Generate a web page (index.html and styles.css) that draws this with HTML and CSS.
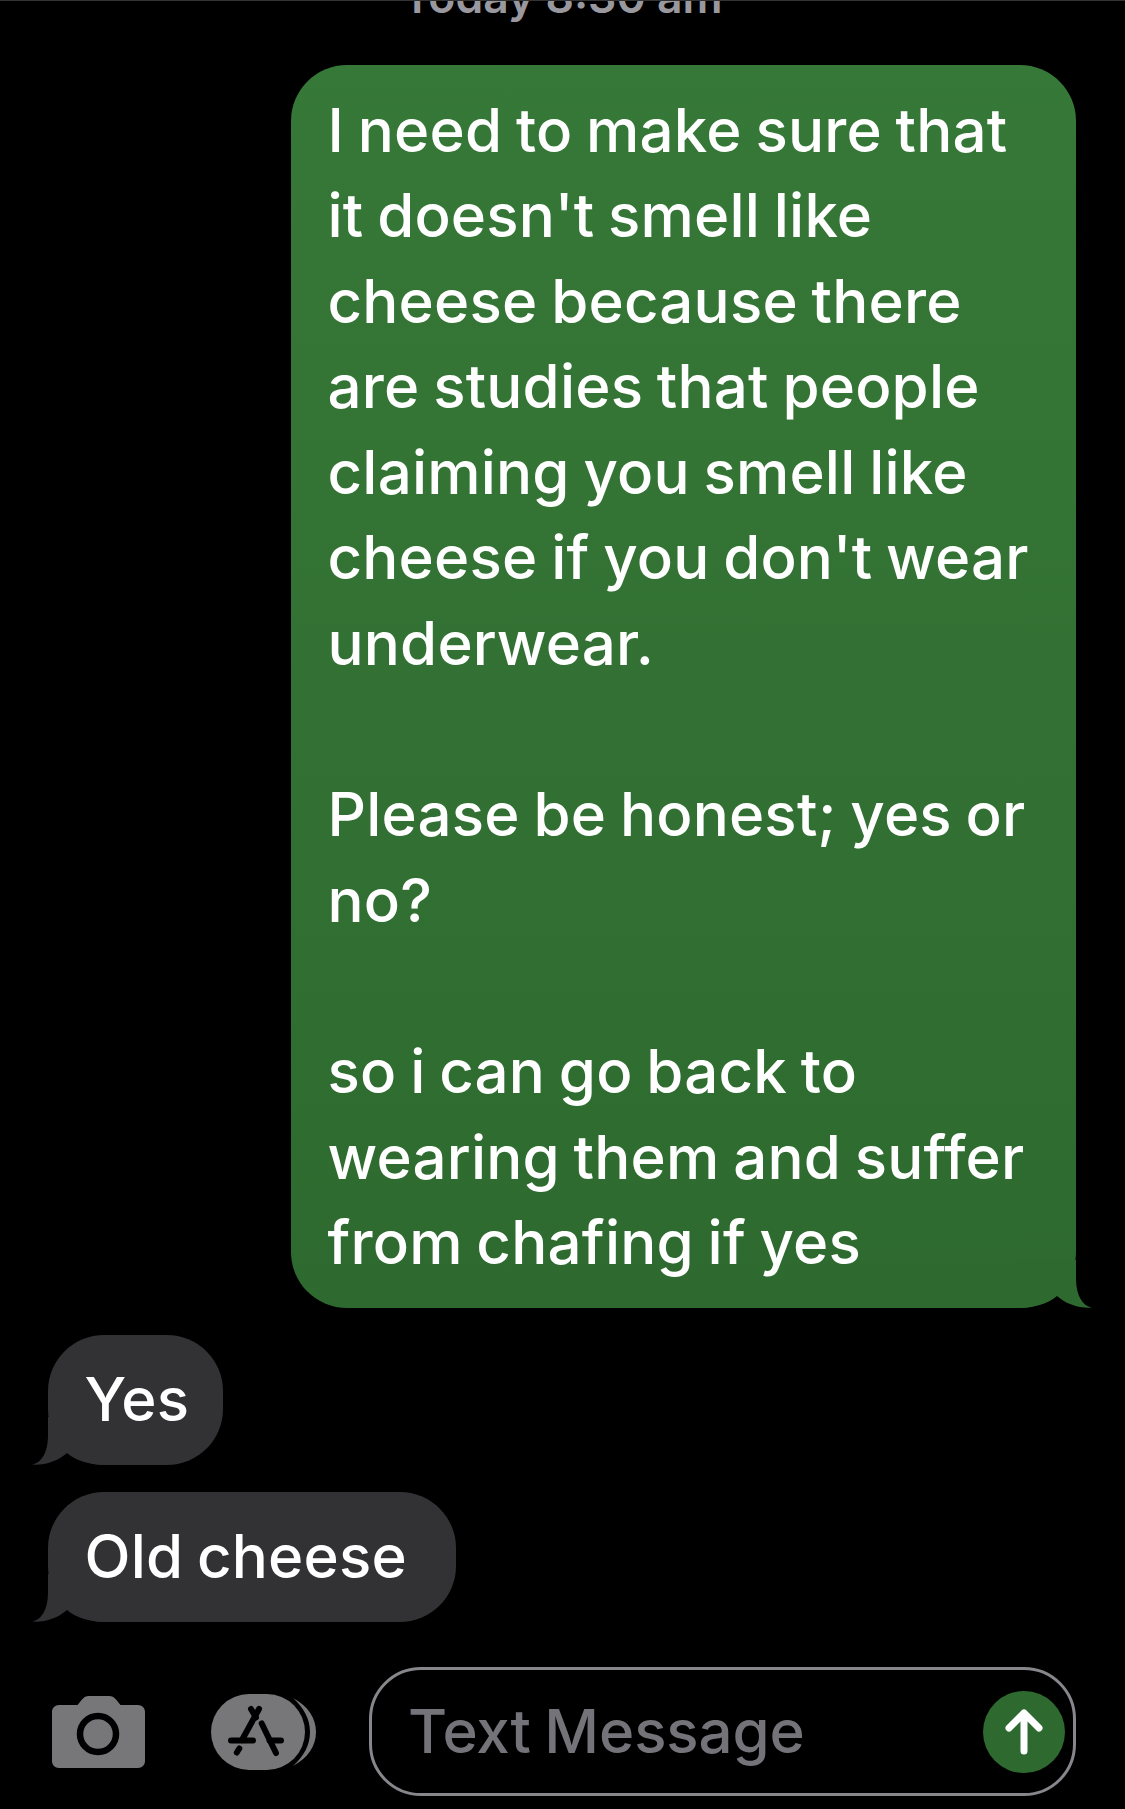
FILE: index.html
```html
<!DOCTYPE html>
<html lang="en">
<head>
<meta charset="utf-8">
<title>Messages</title>
<link rel="stylesheet" href="styles.css">
</head>
<body>
<main class="screen">
  <div class="timestamp">Today 8:30 am</div>
  <div class="bubble out">
    <svg class="tail tail-out" viewBox="0 0 76 48"><path d="M60 0V20C60.5 35 66 46 76 47.6C63 48.5 50 44 41 36C32 44 18 48 0 48V0Z"/></svg>
    <span class="text">I need to make sure that<br>it doesn't smell like<br>cheese because there<br>are studies that people<br>claiming you smell like<br>cheese if you don't wear<br>underwear.<br><br>Please be honest; yes or<br>no?<br><br>so i can go back to<br>wearing them and suffer<br>from chafing if yes</span>
  </div>
  <div class="bubble in first">
    <svg class="tail tail-in" viewBox="0 0 76 48"><path d="M60 0V20C60.5 35 66 46 76 47.6C63 48.5 50 44 41 36C32 44 18 48 0 48V0Z"/></svg>
    <span class="text">Yes</span>
  </div>
  <div class="bubble in second">
    <svg class="tail tail-in" viewBox="0 0 76 48"><path d="M60 0V20C60.5 35 66 46 76 47.6C63 48.5 50 44 41 36C32 44 18 48 0 48V0Z"/></svg>
    <span class="text">Old cheese</span>
  </div>
  <div class="composer">
    <svg class="camera" viewBox="0 0 93 72">
      <path class="icon-fill" d="M7 9H25.5L30 3.500C32 1 34 0 37 0H57C60 0 62 1 64 3.500L68.500 9H86C90 9 93 12 93 16V65C93 69 90 72 86 72H7C3 72 0 69 0 65V16C0 12 3 9 7 9Z"/>
      <circle class="icon-cut" cx="46" cy="38" r="18" stroke-width="6.500"/>
    </svg>
    <svg class="apps" viewBox="0 0 105 76">
      <path class="icon-fill" d="M82 4C97 12 105 24 105 38C105 52 97 64 82 72C93 62 99 51 99 38C99 25 93 14 82 4Z"/>
      <rect class="icon-fill" x="0" y="0" width="94" height="76" rx="38" ry="38"/>
      <g class="icon-cut" stroke-width="6" stroke-linecap="round">
        <path d="M48 15L31 46"/>
        <path d="M40 15L45 23.500"/>
        <path d="M50.700 29.500L65 59"/>
        <path d="M20 46.500H42M58.500 46.500H70"/>
        <path d="M28.300 54.500L25.800 58.500"/>
      </g>
    </svg>
    <div class="field">
      <span class="placeholder">Text Message</span>
      <span class="send">
        <svg class="arrow" viewBox="0 0 82 82"><path d="M41 60V22M26 37L41 22L56 37"/></svg>
      </span>
    </div>
  </div>
</main>
</body>
</html>
```

FILE: styles.css
```css
* { box-sizing: border-box; }
html, body { margin: 0; padding: 0; background: #000; }
.screen {
  width: 1125px;
  height: 1809px;
  overflow: hidden;
  display: flex;
  flex-direction: column;
  background: #000;
  border-top: 1px solid #333;
  font-family: Inter, "Liberation Sans", sans-serif;
  color: #fff;
}
.timestamp {
  height: 64px;
  margin-top: -26px;
  margin-bottom: 26px;
  text-align: center;
  font-size: 44.500px;
  font-weight: 600;
  line-height: 44px;
  color: #98989e;
}
.bubble {
  position: relative;
  padding: 22px 0 22px 36.500px;
  border-radius: 56px;
  font-size: 60px;
  line-height: 85.6px;
  font-weight: 500;
  letter-spacing: 0.2px;
  word-spacing: -2.500px;
  white-space: nowrap;
}
.text { position: relative; }
.out {
  align-self: flex-end;
  width: 785px;
  margin-right: 49px;
  padding-top: 22.500px;
  padding-bottom: 22.500px;
  background: linear-gradient(180deg, #367837 0%, #2e6a2f 100%);
}
.in {
  align-self: flex-start;
  margin-left: 48px;
  background: #323234;
}
.first { margin-top: 27px; width: 174.500px; }
.second { margin-top: 27.500px; width: 408px; }
.tail {
  position: absolute;
  bottom: 0;
  width: 76px;
  height: 48px;
}
.tail-out { right: -16px; fill: #2e6a2f; }
.tail-in { left: -16px; fill: #323234; transform: scaleX(-1); }
.composer {
  display: flex;
  align-items: center;
  margin-top: 45px;
  padding-left: 52px;
}
.camera { width: 93px; height: 72px; flex: none; margin-right: 66px; }
.apps { width: 105px; height: 76px; flex: none; margin-right: 53px; }
.icon-fill { fill: #77777a; }
.icon-cut { fill: none; stroke: #000; }
.field {
  width: 707px;
  height: 129px;
  flex: none;
  display: flex;
  align-items: center;
  justify-content: space-between;
  padding: 0 8px 0 36px;
  border: 3px solid #87868b;
  border-radius: 52px;
}
.placeholder {
  margin-bottom: 2px;
  font-size: 60px;
  font-weight: 500;
  letter-spacing: -0.1px;
  word-spacing: -2.500px;
  color: #747379;
}
.send {
  width: 82px;
  height: 82px;
  flex: none;
  border-radius: 50%;
  background: #2e6a2f;
}
.arrow {
  display: block;
  width: 82px;
  height: 82px;
  fill: none;
  stroke: #fff;
  stroke-width: 7px;
  stroke-linecap: round;
  stroke-linejoin: round;
}
```
